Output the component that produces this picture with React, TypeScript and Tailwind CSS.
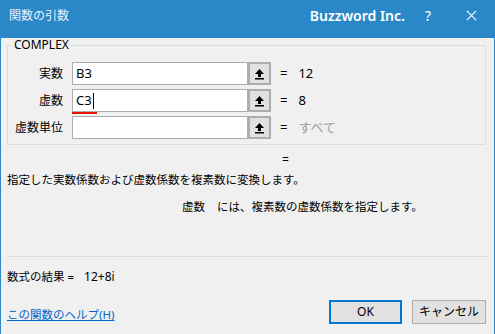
import React from "react";

const FONT = { fontFamily: '"Noto Sans", "Noto Sans CJK JP", sans-serif' };

function RefButton() {
  return (
    <div className="flex h-[23px] w-[23px] items-center justify-center border-2 border-[#adadad] bg-[#e1e1e1]">
      <svg width="11" height="12" viewBox="0 0 11 12">
        <path d="M5.5 1 L10 6 L7 6 L7 9 L4 9 L4 6 L1 6 Z" fill="#000" />
        <rect x="1" y="10" width="9" height="1.5" fill="#000" />
      </svg>
    </div>
  );
}

interface Arg {
  label: string;
  value: string;
  result: string;
  dim?: boolean;
  active?: boolean;
}

const ARGS: Arg[] = [
  { label: "実数", value: "B3", result: "12" },
  { label: "虚数", value: "C3", result: "8", active: true },
  { label: "虚数単位", value: "", result: "すべて", dim: true },
];

export default function App() {
  return (
    <div className="h-[334px] w-[495px] overflow-hidden bg-[#2b88c8] text-[11.5px] text-[#000]" style={FONT}>
      {/* title bar */}
      <div className="flex h-[31px] items-center pl-[9px] pr-[18px] text-white">
        <span className="text-[12px] text-[#e8f2fa]">関数の引数</span>
        <div className="flex-1" />
        <span className="text-[14px] font-semibold">Buzzword Inc.</span>
        <span className="ml-[20px] text-[14px]">?</span>
        <svg className="ml-[35px]" width="11" height="11" viewBox="0 0 12 12">
          <path d="M1 1 L11 11 M11 1 L1 11" stroke="#fff" strokeWidth="1.2" />
        </svg>
      </div>

      {/* body */}
      <div className="mx-px h-[302px] bg-[#f0f0f0] px-[6px]">
        <fieldset className="mt-[7px] w-[479px] border border-[#dcdcdc] pb-[5px]">
          <legend className="ml-[4px] px-[2px] text-[12px] leading-[14px]">COMPLEX</legend>
          <div className="flex flex-col gap-[4px] pt-[10px]">
            {ARGS.map((a) => (
              <div key={a.label} className="flex h-[23px] items-center">
                <span className="w-[64px] shrink-0 whitespace-nowrap pr-[9px] text-right text-[12px]">{a.label}</span>
                <div className="relative flex h-[23px] w-[176px] items-center border border-[#abadb3] bg-white pl-[3px] text-[13px]">
                  {a.value}
                  {a.active && (
                    <>
                      <span className="ml-px inline-block h-[16px] w-px bg-black" />
                      <span className="absolute bottom-[-3px] left-[-1px] h-[2px] w-[25px] bg-[#e51400]" />
                    </>
                  )}
                </div>
                <RefButton />
                <span className="ml-[9px] text-[13px]">=</span>
                <span className={`ml-[11px] text-[13px] ${a.dim ? "text-[#a0a0a0]" : ""}`}>{a.result}</span>
              </div>
            ))}
          </div>
        </fieldset>

        <div className="mt-[8px] pl-[275px] text-[12px] leading-[14px]">=</div>
        <div className="mt-[5px] leading-[16px]">指定した実数係数および虚数係数を複素数に変換します。</div>
        <div className="mt-[11px] pl-[175px] leading-[16px]">
          <span className="mr-[12px]">虚数</span>には、複素数の虚数係数を指定します。
        </div>

        <div className="mt-[41px] h-px w-[481px] bg-[#dcdcdc]" />

        <div className="mt-[12px] leading-[16px]">
          数式の結果 =<span className="ml-[10px] text-[12px]">12+8i</span>
        </div>

        <div className="mt-[15px] flex items-center">
          <span className="mt-[6px] text-[#0066cc] underline">この関数のヘルプ(H)</span>
          <div className="flex-1" />
          <button className="h-[24px] w-[73px] border-2 border-[#0078d7] bg-[#e1e1e1] text-[12px]">OK</button>
          <button className="ml-[10px] mr-[2px] h-[24px] w-[74px] border border-[#adadad] bg-[#e1e1e1] text-[12px]">
            キャンセル
          </button>
        </div>
      </div>
    </div>
  );
}
